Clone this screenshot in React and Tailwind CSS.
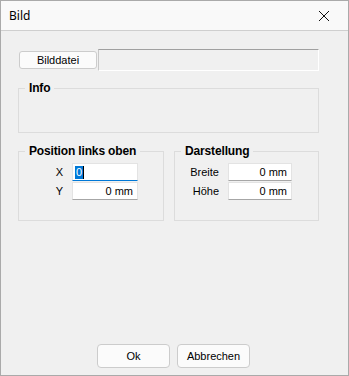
import React from "react";

const font = { fontFamily: '"Liberation Sans", Arial, sans-serif' };

function Field({ value, focused }) {
  return (
    <div
      className={`h-[18px] bg-white border border-[#e3e3e3] flex items-center text-[11px] text-black ${
        focused ? "border-b-[#0078d7] justify-start pl-[2px]" : "border-b-[#a6a6a6] justify-end pr-[4px]"
      }`}
    >
      {focused ? (
        <span className="flex items-center">
          <span className="bg-[#0078d7] text-white px-[1px] leading-[13px]">0</span>
          <span className="w-[1px] h-[13px] bg-black"></span>
        </span>
      ) : (
        <span>{value}</span>
      )}
    </div>
  );
}

function Group({ title, className, children }) {
  return (
    <fieldset className={`border border-[#dcdcdc] ${className}`}>
      <legend className="ml-[6px] px-[4px] text-[12px] font-bold leading-[13px] tracking-[-0.15px] text-black">{title}</legend>
      {children}
    </fieldset>
  );
}

export default function App() {
  return (
    <div className="w-[349px] h-[376px] border border-[#aaaaaa] flex flex-col bg-[#f0f0f0]" style={font}>
      <div className="h-[30px] bg-[#f9f9f9] border-b border-[#cfcfcf] flex items-center justify-between pl-[8px] pr-[18px]">
        <span className="text-[12px] text-black" style={{ fontFamily: '"Noto Sans", "Open Sans", sans-serif' }}>
          Bild
        </span>
        <svg width="12" height="12" viewBox="0 0 12 12">
          <path d="M1 1 L11 11 M11 1 L1 11" stroke="#111" strokeWidth="1" fill="none" />
        </svg>
      </div>
      <div className="flex-1 flex flex-col px-[17px] pt-[18px] pb-[7px]">
        <div className="flex items-center h-[22px]">
          <button className="ml-[1px] w-[78px] h-[18px] bg-[#fbfbfb] border border-[#cccccc] rounded-[3px] text-[11px] text-black leading-none">
            Bilddatei
          </button>
          <div className="ml-[1px] w-[221px] h-[22px] border-t border-l border-t-[#a0a0a0] border-l-[#c8c8c8] border-b border-b-white border-r border-r-white bg-[#f0f0f0]"></div>
        </div>
        <Group title="Info" className="mt-[11px] w-[301px] h-[51px]" />
        <div className="flex mt-[12px]">
          <Group title="Position links oben" className="w-[146px] h-[76px]">
            <div className="grid grid-cols-[44px_66px] gap-x-[9px] gap-y-[1px] mt-[5px] text-[11px] text-black">
              <div className="h-[18px] flex items-center justify-end">X</div>
              <Field focused />
              <div className="h-[18px] flex items-center justify-end">Y</div>
              <Field value="0 mm" />
            </div>
          </Group>
          <Group title="Darstellung" className="ml-[10px] w-[145px] h-[76px]">
            <div className="grid grid-cols-[44px_64px] gap-x-[9px] gap-y-[1px] mt-[5px] text-[11px] text-black">
              <div className="h-[18px] flex items-center justify-end">Breite</div>
              <Field value="0 mm" />
              <div className="h-[18px] flex items-center justify-end">Höhe</div>
              <Field value="0 mm" />
            </div>
          </Group>
        </div>
        <div className="mt-auto flex justify-center gap-[7px] pr-[2px]">
          <button className="w-[73px] h-[24px] bg-[#fbfbfb] border border-[#cccccc] rounded-[4px] text-[11px] text-black">
            Ok
          </button>
          <button className="w-[73px] h-[24px] bg-[#fbfbfb] border border-[#cccccc] rounded-[4px] text-[11px] text-black">
            Abbrechen
          </button>
        </div>
      </div>
    </div>
  );
}
